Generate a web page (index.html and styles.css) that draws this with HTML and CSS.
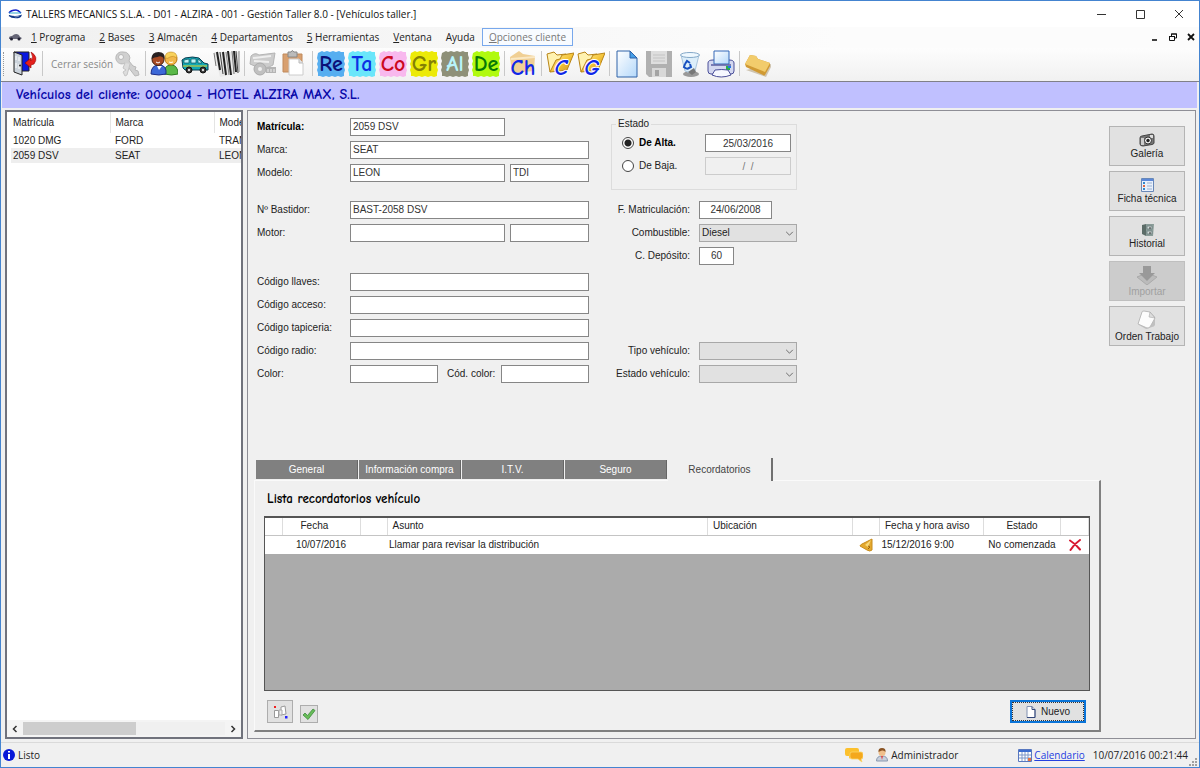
FILE: index.html
```html
<!DOCTYPE html>
<html lang="es">
<head>
<meta charset="utf-8">
<meta name="viewport" content="width=device-width, initial-scale=1">
<title>Gestión Taller 8.0 - Vehículos taller</title>
<link rel="stylesheet" href="styles.css">
</head>
<body>
<svg class="defs" width="0" height="0" aria-hidden="true">
  <defs>
    <linearGradient id="gold" x1="0" y1="0" x2="1" y2="1"><stop offset="0" stop-color="#fff0a0"/><stop offset=".5" stop-color="#f5c63c"/><stop offset="1" stop-color="#c8901c"/></linearGradient>
    <linearGradient id="paper" x1="0" y1="0" x2="1" y2="1"><stop offset="0" stop-color="#fff"/><stop offset="1" stop-color="#b4d8fa"/></linearGradient>
    <symbol id="openfolder" viewBox="0 0 28 28"><path d="M4 22 1 4l7-2 3 3 9-1 2 6" fill="#fff2b0" stroke="#b98518"/><path d="m4 22 6-12 4-1 2-4 12-2-7 17-8 1z" fill="url(#gold)" stroke="#b98518"/></symbol>
    <symbol id="rough" viewBox="0 0 28 28"><path d="m1 3 2-1 2-1 2 1 3-1 3 1 3-1 3 1 3-1 2 1 3 0 0 3 1 3-1 3 1 3-1 3 1 3-1 3 0 3-3 1-3-1-3 1-3-1-3 1-3-1-3 1-3-1-2 0 0-3-1-3 1-3-1-3 1-3-1-3z"/></symbol>
  </defs>
</svg>
<div class="window">
  <header class="titlebar">
    <svg class="appicon" viewBox="0 0 14 10"><path d="M1 4c2-3 4-3 7-3 2 0 3 1 5 3" fill="none" stroke="#1420c8" stroke-width="1.4"/><path d="M1 4h12" fill="none" stroke="#3ac" stroke-width="1"/><path d="M1 6.500c3 1 9 1 12 0-1 3-9 3-12 0" fill="none" stroke="#123a8a" stroke-width="1.200"/></svg>
    <h1>TALLERS MECANICS S.L.A. - D01 - ALZIRA - 001 - Gestión Taller 8.0 - [Vehículos taller.]</h1>
    <div class="winbtns">
      <button aria-label="Minimizar"><svg viewBox="0 0 10 10"><path d="M1 5.500h9" /></svg></button>
      <button aria-label="Maximizar"><svg viewBox="0 0 10 10"><path d="M1.500 1.500h8v8h-8z"/></svg></button>
      <button aria-label="Cerrar"><svg viewBox="0 0 10 10"><path d="m1 1 8 8M9 1 1 9"/></svg></button>
    </div>
  </header>
  <nav class="menubar">
    <svg class="caricon" viewBox="0 0 14 8"><path d="M1 5q0-2 3-2 2-2 4-2 3 0 4 3 2 0 1.500 2H1z" fill="#667"/><circle cx="3.500" cy="6" r="1.500" fill="#223"/><circle cx="11" cy="6" r="1.500" fill="#223"/></svg>
    <a href="#"><u>1</u> Programa</a>
    <a href="#"><u>2</u> Bases</a>
    <a href="#"><u>3</u> Almacén</a>
    <a href="#"><u>4</u> Departamentos</a>
    <a href="#"><u>5</u> Herramientas</a>
    <a href="#"><u>V</u>entana</a>
    <a href="#">Ayuda</a>
    <a href="#" class="active"><u>O</u>pciones cliente</a>
    <div class="mdibtns">
      <button aria-label="Minimizar ventana"><svg viewBox="0 0 8 8"><path d="M1 7h5" stroke-width="1.600"/></svg></button>
      <button aria-label="Restaurar ventana"><svg viewBox="0 0 8 8"><path d="M2.500 3V1h5v4h-2M2 1h6M.5 3.500h5v4h-5zM0 3.500h6"/></svg></button>
      <button aria-label="Cerrar ventana"><svg viewBox="0 0 8 8"><path d="m1 1 6 6M7 1 1 7" stroke-width="1.800"/></svg></button>
    </div>
  </nav>
  <div class="toolbar" role="toolbar">
    <i class="grip"></i>
    <button aria-label="Salir"><svg viewBox="0 0 28 28"><path d="M4 2h15v19H9z" fill="#0a18e0" stroke="#222"/><path d="m4 2 8 3v20l-8-3z" fill="#ccd4dc" stroke="#222"/><path d="M6 6v4M6 13v5M9 7v4M9 14v5" stroke="#fff"/><circle cx="10" cy="15.500" r="1" fill="#222"/><path d="M21 2q8 5 3 12l-3 1v3l-6-5 6-5v3q3-4 0-9" fill="#e4201c" stroke="#900" stroke-width=".6"/></svg></button>
    <i class="sep"></i>
    <button class="logout">Cerrar sesión <svg viewBox="0 0 28 28"><g fill="#d0d0d0" stroke="#b8b8b8"><path d="M10 2a6 6 0 1 0 2 11l10 13 4-1-1-4-3-1 1-3-3-1-4-5a6 6 0 0 0-6-9z"/><circle cx="8" cy="7" r="2.500" fill="#f7f7f7"/><path d="m12 13-2 5 3 2-3 2 2 4 2-1 3-11" fill="#ddd" stroke="#c4c4c4"/></g></svg></button>
    <i class="sep"></i>
    <button aria-label="Clientes"><svg viewBox="0 0 28 28"><path d="M14 24q0-9 7-9t7 9q-6 2-14 0" fill="#5ab848" stroke="#2d7a22"/><circle cx="21" cy="9" r="6" fill="#f2b84a" stroke="#b87514"/><path d="M15 8q0-6 6-6t6 6q-4-3-7-1-2 2-5 1" fill="#f8d25c" stroke="#c08a20" stroke-width=".6"/><path d="M1 24q0-9 8-9t7 9q-7 2-15 0" fill="#3c68d8" stroke="#1c2c88"/><circle cx="8" cy="9.500" r="6" fill="#a84a24" stroke="#421"/><path d="M1.500 9q0-7 7-7t6 7q-3-4-7-2-3 0-6 2" fill="#282020"/><path d="m7 16 2 4 3-4" fill="#fff"/><path d="M6 12q2 2 4 0M19 12q2 1 4 0" fill="none" stroke="#fff"/></svg></button>
    <button aria-label="Vehículos"><svg viewBox="0 0 28 28"><path d="m2 18-1-8 3-2q8-2 14 0l5 5 4 1v6H4z" fill="#12a8b4" stroke="#0a3c50"/><path d="M3 10v3h5V9zM10 9v4h5V9zM17 9v4h4q-2-3-4-4z" fill="#bdf4f6" stroke="#0a5060" stroke-width=".7"/><path d="M2 16h24" stroke="#e8d020"/><circle cx="8" cy="20" r="3" fill="#333" stroke="#111"/><circle cx="22" cy="20" r="3" fill="#333" stroke="#111"/><circle cx="8" cy="20" r="1.200" fill="#ddd"/><circle cx="22" cy="20" r="1.200" fill="#ddd"/></svg></button>
    <button aria-label="Código de barras"><svg viewBox="0 0 28 28"><path d="M2 2h25v21L8 27z" fill="#e8e8e8"/><path d="m2 3 2 13M20 1l2 23" stroke="#777"/><path d="m5 2 3 18M16 1l3 24" stroke="#222" stroke-width="2"/><path d="m8 2 3 22M24 1l2 22" stroke="#444"/><path d="m11 2 3 23M22 1l2 21" stroke="#222" stroke-width="2"/><path d="m14 2 3 23M27 1v21" stroke="#888"/></svg></button>
    <i class="sep"></i>
    <button aria-label="Recepción" disabled><svg viewBox="0 0 28 28"><path d="M2 6q4-4 8-1l16-2-2 12q-8 5-16 2L1 14z" fill="#ccc" stroke="#b4b4b4"/><path d="m4 8 18-2M5 11l15 1" stroke="#eee" stroke-width="2"/><circle cx="11" cy="19" r="6" fill="#c0c0c0" stroke="#aaa"/><circle cx="11" cy="19" r="2" fill="#eee"/><path d="M16 17h11v6H17z" fill="#b4b4b4"/><path d="M19 19v3M22 19v3M25 19v3" stroke="#eee"/></svg></button>
    <button aria-label="Pegar"><svg viewBox="0 0 28 28"><path d="M3 4h19v18H3z" fill="#d8a070" stroke="#c08a5c"/><path d="M8 2h3q1-3 3 0h3v5H8z" fill="#bbb" stroke="#888"/><path d="M9 9h10l4 4v12H9z" fill="#fff" stroke="#ccc"/><path d="M19 9v4h4" fill="#e4e4e4" stroke="#bbb"/></svg></button>
    <i class="sep"></i>
    <button class="letters"><svg viewBox="0 0 28 28"><use href="#rough" fill="#56aef0"/><text x="14" y="21" fill="#0a1078">Re</text></svg></button>
    <button class="letters"><svg viewBox="0 0 28 28"><use href="#rough" fill="#6ae6fa"/><text x="14" y="21" fill="#0c30e4">Ta</text></svg></button>
    <button class="letters"><svg viewBox="0 0 28 28"><use href="#rough" fill="#f8b8ee"/><text x="14" y="21" fill="#cc0820">Co</text></svg></button>
    <button class="letters"><svg viewBox="0 0 28 28"><use href="#rough" fill="#ecea08"/><text x="14" y="21" fill="#848004">Gr</text></svg></button>
    <button class="letters"><svg viewBox="0 0 28 28"><use href="#rough" fill="#8e9078"/><text x="14" y="21" fill="#b8f4fa">Al</text></svg></button>
    <button class="letters"><svg viewBox="0 0 28 28"><use href="#rough" fill="#b0fa10"/><text x="14" y="21" fill="#067806">De</text></svg></button>
    <i class="sep"></i>
    <button class="letters"><svg viewBox="0 0 28 28"><path d="m1 7 9-6 4 3 12 2-1 15-22 2z" fill="#f0cf94"/><path d="m2 9 24-2" stroke="#fae8c4" stroke-width="2"/><text x="14" y="25" fill="#1028e8">Ch</text></svg></button>
    <i class="sep"></i>
    <button class="letters"><svg viewBox="0 0 28 28"><use href="#openfolder"/><text x="15" y="25" fill="#1028e8" stroke="#fff" stroke-width="2" paint-order="stroke" font-style="italic">C</text></svg></button>
    <button class="letters"><svg viewBox="0 0 28 28"><use href="#openfolder"/><text x="15" y="25" fill="#1028e8" stroke="#fff" stroke-width="2" paint-order="stroke" font-style="italic">G</text></svg></button>
    <i class="sep"></i>
    <button aria-label="Nuevo documento"><svg viewBox="0 0 28 28"><path d="M3 1h13l7 7v19H3z" fill="url(#paper)" stroke="#2e62a8"/><path d="M16 1v7h7z" fill="#48a0e8" stroke="#2e62a8"/></svg></button>
    <button aria-label="Guardar" disabled><svg viewBox="0 0 28 28"><path d="M1 1h26v26H4l-3-3z" fill="#b0b0b0"/><path d="M6 1h16v13H6z" fill="#dedede"/><path d="M8 5h12M8 8h12M8 11h12" stroke="#c4c4c4"/><path d="M7 18h14v9H7z" fill="#d8d8d8"/><path d="M10 20h4v6h-4z" fill="#a4a4a4"/></svg></button>
    <button aria-label="Papelera"><svg viewBox="0 0 28 28"><ellipse cx="15" cy="24" rx="8" ry="3" fill="#999"/><path d="m5 5 4 16q5 3 10 0l4-16z" fill="#dceefa" stroke="#a8c4dc"/><ellipse cx="14" cy="5" rx="9.500" ry="2.500" fill="#eef8ff" stroke="#84a8c8"/><path d="m9 14 2-3 3 2M14 14l1 3-4 2M11 19l-3-2 1-3" fill="none" stroke="#1850c0" stroke-width="2"/><path d="m12 22 6-4 2 4-4 3z" fill="#777"/></svg></button>
    <button aria-label="Imprimir"><svg viewBox="0 0 28 28"><path d="M1 13q0-3 5-3h16q5 0 5 3v8q0 3-3 3H4q-3 0-3-3z" fill="#d4d8f0" stroke="#4a4e98"/><path d="M7 1h15v13H7z" fill="url(#paper)" stroke="#3468b8"/><path d="M4 15h20" stroke="#5a5ea0" stroke-width="1.500"/><path d="M19 16h4v4h-4z" fill="#28b048"/><path d="M21 16h3v2h-3z" fill="#2078e8"/><path d="m8 20-3 5q9 4 19 0l-3-5q-6-1-13 0" fill="#f6f8ff" stroke="#4a4e98"/></svg></button>
    <i class="sep"></i>
    <button aria-label="Carpeta"><svg viewBox="0 0 28 28"><path d="m2 20 20 7 5-10v-3z" fill="#8a6a30" opacity=".35"/><path d="m1 14 5-9 6 1 2 3 12 4v3l-5 9q-1 1-2 0L2 17z" fill="#d09a34"/><path d="m1 14 5-9 6 1 2 3 12 4-5 9z" fill="#f2cc6c"/></svg></button>
  </div>
  <h2 class="band">Vehículos del cliente: 000004 - HOTEL ALZIRA MAX, S.L.</h2>

  <main class="work">
    <section class="list">
      <div class="listbody">
        <table>
          <colgroup><col class="c99"><col class="c104"><col class="c104"></colgroup>
          <thead><tr><th>Matrícula</th><th>Marca</th><th>Modelo</th></tr></thead>
          <tbody>
            <tr><td>1020 DMG</td><td>FORD</td><td>TRANSIT</td></tr>
            <tr class="sel"><td>2059 DSV</td><td>SEAT</td><td>LEON</td></tr>
          </tbody>
        </table>
      </div>
      <div class="hscroll">
        <button aria-label="Desplazar a la izquierda"><svg viewBox="0 0 8 8"><path d="M5.500 1 2.500 4l3 3"/></svg></button>
        <div class="track"><div class="thumb"></div></div>
        <button aria-label="Desplazar a la derecha"><svg viewBox="0 0 8 8"><path d="m2.500 1 3 3-3 3"/></svg></button>
      </div>
    </section>

    <section class="detail">
      <div class="top">
        <form class="form">
          <div class="col">
            <div class="group">
              <div class="row"><label class="strong" for="mat">Matrícula:</label><input id="mat" class="w155" value="2059 DSV"></div>
              <div class="row"><label for="marca">Marca:</label><input id="marca" class="grow" value="SEAT"></div>
              <div class="row"><label for="modelo">Modelo:</label><input id="modelo" class="w155" value="LEON"><input class="grow" aria-label="Versión" value="TDI"></div>
            </div>
            <div class="group second">
              <div class="row"><label for="bast">Nº Bastidor:</label><input id="bast" class="grow" value="BAST-2058 DSV"></div>
              <div class="row"><label for="motor">Motor:</label><input id="motor" class="w155"><input class="grow" aria-label="Número de motor"></div>
            </div>
            <div class="group third">
              <div class="row"><label for="cl">Código llaves:</label><input id="cl" class="grow"></div>
              <div class="row"><label for="ca">Código acceso:</label><input id="ca" class="grow"></div>
              <div class="row"><label for="ct">Código tapiceria:</label><input id="ct" class="grow"></div>
              <div class="row"><label for="cr">Código radio:</label><input id="cr" class="grow"></div>
              <div class="row color"><label for="color">Color:</label><input id="color"><label for="cc" class="mid">Cód. color:</label><input id="cc"></div>
            </div>
          </div>
          <div class="col right">
            <fieldset>
              <legend>Estado</legend>
              <div class="state"><input type="radio" name="estado" id="alta" checked><label class="strong" for="alta">De Alta.</label><input class="date" aria-label="Fecha de alta" value="25/03/2016"></div>
              <div class="state"><input type="radio" name="estado" id="baja"><label for="baja">De Baja.</label><input class="date" aria-label="Fecha de baja" value="/  /" disabled></div>
            </fieldset>
            <div class="group">
              <div class="row"><label for="fm">F. Matriculación:</label><input id="fm" class="w73" value="24/06/2008"></div>
              <div class="row"><label for="comb">Combustible:</label><span class="select"><select id="comb"><option>Diesel</option></select><svg viewBox="0 0 10 6"><path d="m1 1 4 4 4-4"/></svg></span></div>
              <div class="row"><label for="dep">C. Depósito:</label><input id="dep" class="w35" value="60"></div>
            </div>
            <div class="group types">
              <div class="row"><label for="tv">Tipo vehículo:</label><span class="select"><select id="tv"><option></option></select><svg viewBox="0 0 10 6"><path d="m1 1 4 4 4-4"/></svg></span></div>
              <div class="row"><label for="ev">Estado vehículo:</label><span class="select"><select id="ev"><option></option></select><svg viewBox="0 0 10 6"><path d="m1 1 4 4 4-4"/></svg></span></div>
            </div>
          </div>
        </form>
        <div class="side">
          <button><svg viewBox="0 0 16 14"><path d="M1 5q0-2 2-2l10-2q2 0 2 2v7q0 1-2 1.500L4 13q-3 0-3-2z" fill="#777" stroke="#444"/><path d="M2 5h3v7H2z" fill="#ccc"/><path d="M11 2h3v3h-3z" fill="#ddd"/><circle cx="9" cy="7.500" r="3.500" fill="#eee" stroke="#333"/><circle cx="9" cy="7.500" r="1.700" fill="#222"/></svg>Galería</button>
          <button><svg viewBox="0 0 16 14"><path d="M2.500.5h12v13h-12z" fill="#e8f0fc" stroke="#6888b8"/><path d="M3 1h11v2H3z" fill="#5c88d8"/><path d="M4 5h2M4 11h2" stroke="#38c" stroke-width="2"/><path d="M4 8h2" stroke="#d64" stroke-width="2"/><path d="M8 5h5M8 8h5M8 11h5" stroke="#9ab0d0"/></svg>Ficha técnica</button>
          <button><svg viewBox="0 0 16 14"><path d="m3 2 4-1v12l-4-2z" fill="#5c6c68"/><path d="M7 1h8l-1 12H7z" fill="#8a9c98"/><path d="M8 3h5v3H8zM8 8h5v3H8z" fill="#d4dcda" stroke="#788"/><path d="M10 5h2M10 10h2" stroke="#333"/></svg>Historial</button>
          <button disabled><svg class="big" viewBox="0 0 22 20"><path d="m1 12 5-2 5 4 5-4 5 2-10 8z" fill="#bbb" stroke="#aaa"/><path d="M7 1h8v7h4l-8 8-8-8h4z" fill="#999"/></svg>Importar</button>
          <button><svg class="big" viewBox="0 0 22 20"><path d="M3 15q-1-1 0-3L6 2q0-1 2-1l6 1 5 5v8q-1 2-3 2l-6 2z" fill="#aaa" opacity=".6"/><path d="m2 14 4-12q0-1 2-1l6 1 5 6-5 9q-1 1-3 1z" fill="#fcfcfc" stroke="#bbb"/><path d="m14 2-1 5 6 1z" fill="#ddd" stroke="#aaa" stroke-width=".6"/></svg>Orden Trabajo</button>
        </div>
      </div>

      <div class="tabs" role="tablist">
        <button role="tab">General</button>
        <button role="tab">Información compra</button>
        <button role="tab">I.T.V.</button>
        <button role="tab">Seguro</button>
        <button role="tab" class="on" aria-selected="true">Recordatorios</button>
      </div>
      <div class="tabpanel" role="tabpanel">
        <h3>Lista recordatorios vehículo</h3>
        <div class="gridbox">
          <table>
            <colgroup><col class="c18"><col class="c78"><col class="c27"><col><col class="c145"><col class="c27"><col class="c105"><col class="c77"><col class="c28"></colgroup>
            <thead><tr><th></th><th class="fecha">Fecha</th><th></th><th>Asunto</th><th>Ubicación</th><th></th><th>Fecha y hora aviso</th><th class="ctr">Estado</th><th></th></tr></thead>
            <tbody><tr><td></td><td class="ctr">10/07/2016</td><td></td><td>Llamar para revisar la distribución</td><td></td>
              <td class="ctr"><svg class="bell" viewBox="0 0 14 14"><path d="M13 1v11q-2 2-5 0L1 8q0-1 2-2z" fill="#e4a82c" stroke="#c88c1c"/><path d="m12 2-6 5 3 2z" fill="#f8d878"/><path d="m9 8 2 1-2 2" stroke="#9a6410" fill="none"/></svg></td>
              <td>15/12/2016 9:00</td><td class="ctr">No comenzada</td>
              <td class="ctr"><svg class="del" viewBox="0 0 12 12"><path d="M1 1.500q5 3 10 9M11 1Q5 5 1.500 11" fill="none" stroke="#d81830" stroke-width="2" stroke-linecap="round"/></svg></td></tr></tbody>
          </table>
        </div>
        <div class="actions">
          <button class="tool" aria-label="Organizar"><svg viewBox="0 0 16 14"><path d="M2.500 5.500h4v7h-4z" fill="#fff" stroke="#999"/><path d="m9 2 4-1 1 8-5 1z" fill="#fff" stroke="#999"/><path d="M7 5h3v5H7z" fill="#eee" stroke="#aaa"/><path d="M2 1h2v2H2z" fill="#e22"/><path d="M13 11h2.500v2.500H13z" fill="#22f"/></svg></button>
          <button class="check" aria-label="Completar"><svg viewBox="0 0 14 14"><path d="m1 8 2-2 2.500 2.500L11 2l2 1.500L6 12.500z" fill="#68bc58" stroke="#3c8c3c" stroke-width=".8"/></svg></button>
          <button class="new"><svg viewBox="0 0 10 12"><path d="M1 .5h5l3 3v8H1z" fill="#fff" stroke="#8090b0"/><path d="M6 .5v3h3v8H1" fill="none" stroke="#34487a"/></svg>Nuevo</button>
        </div>
      </div>
    </section>
  </main>

  <footer class="status">
    <svg class="info" viewBox="0 0 12 12"><circle cx="6" cy="6" r="6" fill="#0818d8"/><path d="M6 5v5M6 2v1.600" stroke="#fff" stroke-width="2"/></svg>
    <span>Listo</span>
    <svg class="chat" viewBox="0 0 18 16"><path d="M2 1h10q2 0 2 2v4q0 2-2 2H6l-2 3V9H2Q0 9 0 7V3q0-2 2-2" fill="#fcc02c"/><path d="M7 5h9q2 0 2 2v3q0 2-2 2l1 3-4-3H7q-2 0-2-2V7q0-2 2-2" fill="#f4a81c" stroke="#fbd468" stroke-width=".8"/></svg>
    <span class="user"><svg viewBox="0 0 12 14"><path d="M.5 13q0-5 5.500-5t5.500 5z" fill="#c8d0dc" stroke="#8898b0"/><path d="m5 8 1 4 1-4" fill="#d44"/><circle cx="6" cy="4.500" r="3.500" fill="#f0c08c"/><path d="M2.500 4Q2 0 6 0t3.500 4Q8 2 6 2.500T2.500 4" fill="#8a5424"/></svg>Administrador</span>
    <span class="cal"><svg viewBox="0 0 14 13"><path d="M.5.500h13v12H.5z" fill="#fff" stroke="#5878c0"/><path d="M1 1h12v2H1z" fill="#3c6cd0"/><path d="M1 6h12M1 9h12M4 3v9M7 3v9M10 3v9" stroke="#7c96c8"/><path d="M10 9h3v3h-3z" fill="#e87040"/></svg><a href="#">Calendario</a></span>
    <time>10/07/2016 00:21:44</time>
    <svg class="grab" viewBox="0 0 10 10"><path d="M7 1h2v2H7zM4 4h2v2H4zM7 4h2v2H7zM1 7h2v2H1zM4 7h2v2H4zM7 7h2v2H7z" fill="#a0a0a0"/></svg>
  </footer>
</div>
</body>
</html>
```

FILE: styles.css
```css
* { box-sizing: border-box; }
body { margin: 0; font: 10px/14px "Liberation Sans", Arial, sans-serif; color: #222; }
button, input, select { font: inherit; color: inherit; margin: 0; }
button { padding: 0; border: 0; background: none; }
h1, h2, h3 { margin: 0; font-weight: normal; }
svg { display: block; }
.defs { position: absolute; }

.window { display: flex; flex-direction: column; min-height: 100vh; background: #f0f0f0; border: 1px solid #4484d0; }

.titlebar { display: flex; align-items: center; height: 26px; padding: 0 15px 0 7px; background: #fff; }
.appicon { width: 14px; height: 10px; margin-right: 4px; }
.titlebar h1 { font: 10px/16px "Open Sans", "Noto Sans", sans-serif; color: #111; }
.winbtns { display: flex; gap: 29px; margin-left: auto; }
.winbtns svg { width: 10px; height: 10px; fill: none; stroke: #333; }

.menubar { display: flex; align-items: center; height: 21px; padding: 0 4px 1px 7px; background: linear-gradient(90deg, #f0f0f0, #fcfcfc 70%); font: 10px/16px "Open Sans", "Noto Sans", sans-serif; }
.menubar a { padding: 0 6px; border: 1px solid transparent; color: #222; text-decoration: none; }
.menubar a.active { border-color: #78a8ec; color: #777; background: #f8fbff; }
.caricon { width: 14px; height: 8px; margin-right: 2px; }
.mdibtns { display: flex; gap: 10px; margin-left: auto; }
.mdibtns svg { width: 8px; height: 8px; fill: none; stroke: #111; }

.toolbar { display: flex; align-items: center; gap: 3px; height: 34px; padding: 0 3px 2px 2px; background: linear-gradient(#fdfdfd, #f1f1f1); border-bottom: 1px solid #808088; }
.toolbar svg { width: 28px; height: 28px; }
.grip { width: 4px; height: 24px; border-left: 1px dotted #999; }
.sep { width: 3px; height: 25px; background: linear-gradient(90deg, transparent 1px, #c8c8c8 1px, #c8c8c8 2px, transparent 2px); }
.logout { display: flex; align-items: center; padding-left: 4px; color: #888; font-family: "Open Sans", "Noto Sans", sans-serif; }
.letters text { font-family: "Comic Sans MS", "Comic Neue", Lato, sans-serif; font-size: 22px; font-weight: bold; text-anchor: middle; }

.band { height: 26px; margin: 0 2px 0 1px; padding-left: 14px; background: #c0c0ff; color: #0808a8; font: bold 14px/26px "Comic Sans MS", "Comic Neue", Lato, sans-serif; }

.work { flex: 1; display: flex; gap: 4px; padding: 2px 3px 3px 4px; }
.list { display: flex; flex-direction: column; flex: none; width: 238px; background: #fff; border: 2px solid #70727c; }
.listbody { flex: 1; overflow: hidden; padding-left: 4px; }
.list table { width: 307px; table-layout: fixed; border-collapse: collapse; }
.c99 { width: 99px; } .c104 { width: 104px; }
.list th, .list td { padding: 0 0 0 5px; text-align: left; font-weight: normal; line-height: 15px; height: 15px; }
.list th { height: 21px; border-left: 1px solid #e4e4e4; }
.list th:first-child { border-left: 0; }
.list td:first-child, .list th:first-child { padding-left: 2px; }
.list .sel { background: #eee; }
.hscroll { display: flex; align-items: center; height: 17px; background: #f4f4f4; padding: 0 4px; }
.hscroll svg { width: 8px; height: 8px; fill: none; stroke: #333; stroke-width: 1.5; }
.track { flex: 1; margin: 0 4px; background: #f0f0f0; }
.thumb { width: 56%; height: 13px; background: #cdcdcd; }

.detail { flex: 1; display: flex; flex-direction: column; min-width: 0; padding: 7px 10px 6px 6px; border: 1px solid #8e8e96; }
.top { display: flex; justify-content: space-between; padding-left: 3px; }
.form { display: flex; gap: 22px; }
.col { display: flex; flex-direction: column; width: 332px; }
.col.right { width: 186px; }
.group { display: flex; flex-direction: column; gap: 5px; }
.group.second { margin-top: 19px; }
.group.third { margin-top: 31px; }
.group.types { margin-top: 77px; }
.row { display: flex; gap: 5px; height: 18px; }
.row label { flex: none; width: 88px; line-height: 17px; }
.row .mid { width: 53px; padding-left: 4px; }
.row.color { gap: 5px; }
.row.color input { flex: 1; }
.form .strong { font-weight: bold; color: #000; }
.col.right .row { gap: 9px; }
.col.right .row label { width: 79px; text-align: right; }
.form input:not([type=radio]) { min-width: 0; padding: 0 2px; border: 1px solid #868686; background: #fff; color: #333; }
.w155 { width: 155px; }
.grow { flex: 1; }
.form .w73, .form .w35, .form .date { text-align: center; }
.w73 { width: 73px; }
.w35 { width: 35px; }
.select { display: grid; align-items: center; flex: 1; }
.select > * { grid-area: 1 / 1; }
.select select { appearance: none; width: 100%; height: 18px; padding: 0 2px; border: 1px solid #a8a8a8; border-radius: 0; background: #e1e1e1; }
.select svg { justify-self: end; width: 9px; height: 5px; margin-right: 3px; fill: none; stroke: #555; pointer-events: none; }
fieldset { display: flex; flex-direction: column; gap: 5px; height: 72px; margin: 0 0 11px; padding: 4px 5px 0 10px; border: 1px solid #dcdcdc; }
legend { margin-left: -6px; padding: 0 2px; line-height: 12px; }
.state { display: flex; align-items: center; height: 18px; }
.state input[type=radio] { appearance: none; width: 12px; height: 12px; margin: 0 5px 0 0; border: 1px solid #444; border-radius: 50%; background: #fff; }
.state input[type=radio]:checked { background: radial-gradient(#222 0 3px, #fff 4px); }
.form .state .date { width: 86px; height: 18px; margin-left: auto; }
.form .state .date:disabled { background: #f0f0f0; border-color: #ccc; color: #777; white-space: pre; }

.side { display: flex; flex-direction: column; gap: 5px; padding-top: 8px; }
.side button { display: flex; flex-direction: column; align-items: center; justify-content: center; width: 76px; height: 40px; border: 1px solid #b4b4b4; background: #e1e1e1; line-height: 13px; }
.side button:disabled { background: #ccc; border-color: #bfbfbf; color: #a0a0a0; }
.side svg { width: 16px; height: 14px; }
.side svg.big { width: 22px; height: 20px; }

.tabs { display: flex; align-items: flex-end; gap: 1px; margin-top: 75px; padding-left: 2px; }
.tabs button { width: 102px; height: 19px; margin-bottom: 1px; border-right: 1px solid #666; background: #808080; color: #fff; }
.tabs .on { width: 105px; height: 23px; margin-bottom: -1px; background: #f0f0f0; color: #444; border-right: 2px solid #707070; position: relative; }
.tabpanel { flex: 1; display: flex; flex-direction: column; margin-right: 84px; padding: 10px 9px 7px 9px; border: solid #808080; border-width: 1px 2px 2px 1px; border-top-color: #fafafa; border-left-color: #fafafa; }
.tabpanel h3 { margin-left: 3px; font: bold 13px/16px "Comic Sans MS", "Comic Neue", Lato, sans-serif; color: #000; }
.gridbox { flex: 1; margin-top: 9px; border: 1px solid #555; border-top-width: 2px; background: #ababab; }
.gridbox table { width: 100%; table-layout: fixed; border-collapse: collapse; background: #fff; }
.gridbox th, .gridbox td { padding: 0 2px; text-align: left; font-weight: normal; white-space: nowrap; }
.gridbox th { height: 17px; padding-left: 5px; border-right: 1px solid #ddd; border-bottom: 1px solid #c4c4c4; }
.gridbox .fecha { padding-left: 18px; }
.gridbox td { height: 19px; }
.gridbox .ctr { text-align: center; padding: 0; }
.c18 { width: 17px; } .c27 { width: 27px; } .c28 { width: 28px; } .c77 { width: 77px; }
.c78 { width: 78px; } .c105 { width: 104px; } .c145 { width: 145px; }
.bell { width: 14px; height: 14px; margin: 0 auto; }
.del { width: 12px; height: 12px; margin: 0 auto; }
.actions { display: flex; align-items: flex-end; gap: 7px; margin-top: 9px; padding: 0 4px 0 3px; }
.actions button { display: flex; align-items: center; justify-content: center; border: 1px solid #adadad; background: #e1e1e1; }
.actions .tool { width: 26px; height: 23px; }
.tool svg { width: 16px; height: 14px; }
.actions .check { width: 18px; height: 18px; }
.check svg { width: 14px; height: 14px; }
.actions .new { gap: 5px; width: 76px; height: 23px; margin-left: auto; border: 2px solid #0a74d8; outline: 1px dotted #333; outline-offset: -3px; }
.new svg { width: 10px; height: 12px; }

.status { display: flex; align-items: center; height: 25px; padding: 0 1px 0 2px; border-top: 1px solid #dadada; font: 10px/16px "Open Sans", "Noto Sans", sans-serif; }
.info { width: 12px; height: 12px; margin-right: 3px; }
.chat { width: 18px; height: 16px; margin-left: auto; margin-right: 13px; }
.user, .cal { display: flex; align-items: center; gap: 3px; }
.user svg { width: 12px; height: 14px; }
.cal { margin-left: 60px; margin-right: 8px; gap: 2px; }
.cal svg { width: 14px; height: 13px; }
.cal a { color: #2440e0; }
.grab { align-self: flex-end; width: 10px; height: 10px; margin-left: 0; }
```
